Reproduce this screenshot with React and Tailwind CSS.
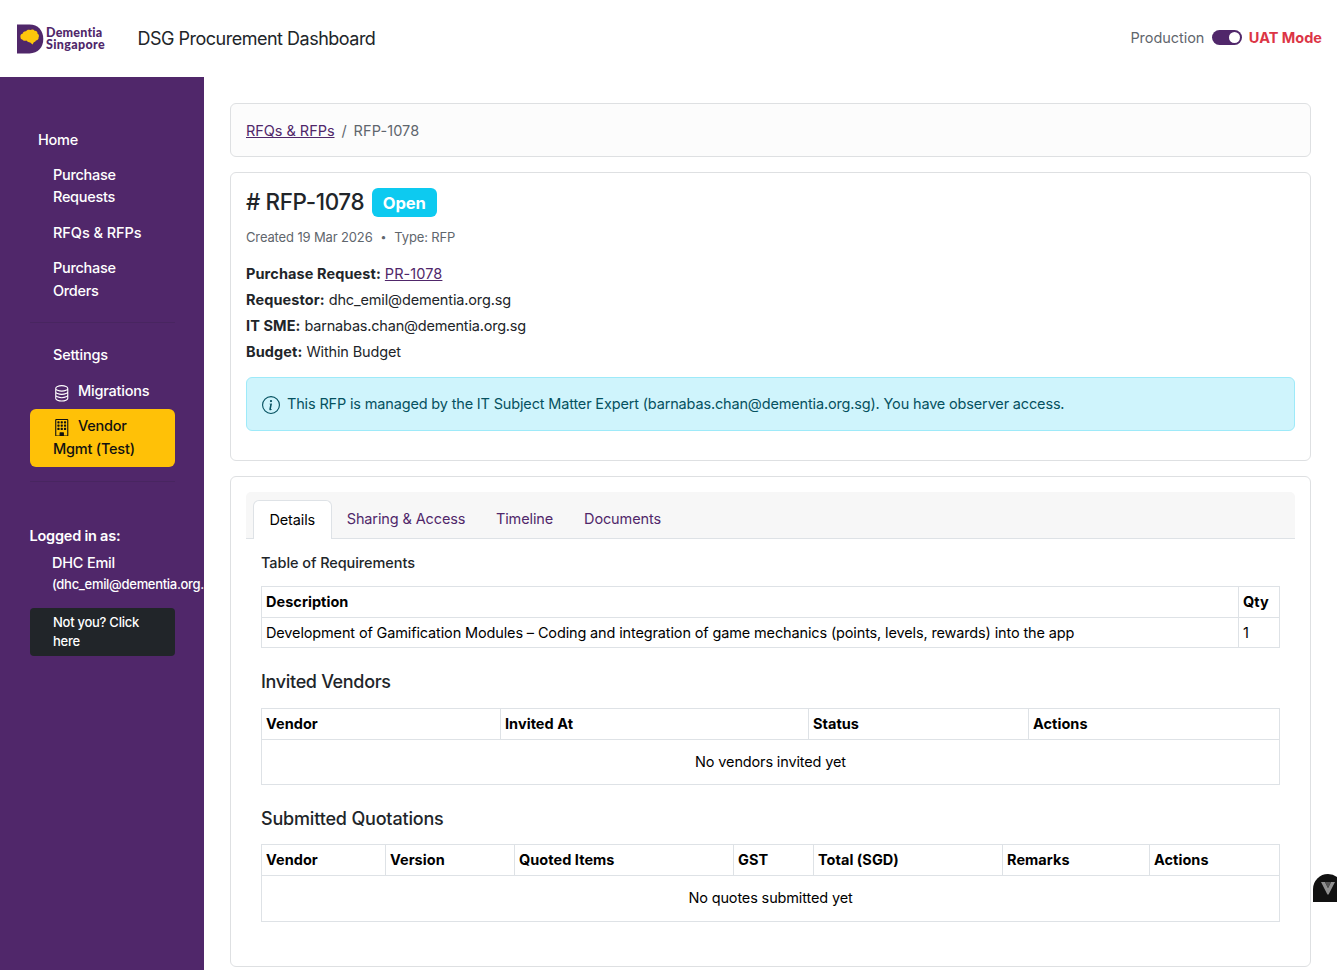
import React from "react";
import { BsDatabase, BsBuilding, BsInfoCircle } from "react-icons/bs";

function Logo() {
  return (
    <div className="flex w-[90px] items-center gap-[2px]">
      <svg width="27" height="30" viewBox="0 0 27 30">
        <path d="M0 0.5H12.5C21 .5 26.3 6.6 26.3 15S21 29.4 12.5 29.4H0Z" fill="#50276a" />
        <path d="M3.5 13.2C2.9 11.4 4.1 10 5.6 9.8 5.7 7.8 7.6 6.9 9 7.2 9.7 5.6 12 5.2 13.2 6.1 14.8 5 16.8 5.4 17.6 6.8 19.6 6.6 20.8 8.2 20.4 9.4 22 10.3 22.3 12.2 21.6 13.3 22 15.3 20.4 16.5 18.9 16.6 18.6 17.8 17.4 18.2 16.8 18.2L15.6 20.5 13.2 18.4C11.4 18.2 10.2 17.6 9.4 16.5 7.6 17.2 6 16.6 5.3 15.5 4 15.2 3.4 14.2 3.5 13.2Z" fill="#fdc70c" />
      </svg>
      <div className="flex flex-col font-[Lato,sans-serif] text-[12.5px] leading-[11.5px] font-black text-[#50276a]">
        <span className="tracking-[0.2px]">Dementia</span>
        <span className="tracking-[0.34px]">Singapore</span>
      </div>
    </div>
  );
}

function Header() {
  return (
    <header className="flex h-[77px] shrink-0 items-center justify-between bg-white pr-[15px] pl-[17px]">
      <div className="flex items-center">
        <Logo />
        <h1 className="ml-[30.5px] text-[18px] leading-6 tracking-[-0.5px] whitespace-nowrap">DSG Procurement Dashboard</h1>
      </div>
      <div className="flex items-center pb-[2px] whitespace-nowrap">
        <span className="pt-[2px] tracking-[-0.05px] text-[#5f666d]">Production</span>
        <span className="ml-[7.5px] flex h-[15px] w-[30px] items-center justify-end rounded-full bg-[#50276a] pr-[2px]">
          <span className="size-[11px] rounded-full bg-white" />
        </span>
        <span className="ml-[7px] pt-px font-bold tracking-normal text-[#dc3545]">UAT Mode</span>
      </div>
    </header>
  );
}

function Sidebar() {
  return (
    <aside className="w-[204px] shrink-0 overflow-hidden bg-[#50276a] pt-[45px] pr-[29.5px] pl-[29.5px] font-medium tracking-[-0.22px] text-white">
      <nav className="flex flex-col">
        <a className="px-[8.5px] py-[6.5px]">Home</a>
        <a className="px-[23.5px] py-[6.5px] tracking-[-0.3px]">Purchase Requests</a>
        <a className="py-[6.5px] pl-[23.5px] tracking-[-0.05px] whitespace-nowrap">RFQs &amp; RFPs</a>
        <a className="px-[23.5px] py-[6.5px] tracking-[-0.3px]">Purchase Orders</a>
        <hr className="mt-[13.5px] mb-[15px] border-[#482560]" />
        <a className="py-[6.5px] pl-[23.5px]">Settings</a>
        <a className="flex items-center py-[6.5px] pl-[23.5px]">
          <BsDatabase className="mt-[3px] mr-[7.5px] -mb-[1px] size-[17.5px]" />
          Migrations
        </a>
        <a className="rounded-[6px] bg-[#ffc107] py-[6.5px] pl-[23.5px] text-[#111]">
          <span className="flex items-center">
            <BsBuilding className="mt-[2px] mr-[7.5px] size-[17.5px]" />
            Vendor
          </span>
          Mgmt (Test)
        </a>
        <hr className="mt-[14.5px] border-[#482560]" />
      </nav>
      <div className="mt-[42.5px] font-semibold">Logged in as:</div>
      <div className="mt-[5.5px] pl-[22.5px]">
        <div>DHC Emil</div>
        <div className="text-[13px] leading-[19px] tracking-[-0.3px] whitespace-nowrap">(dhc_emil@dementia.org.sg)</div>
      </div>
      <div className="mt-[14px] rounded-[4px] bg-[#212529] px-[23.5px] pt-[5px] pb-[4px] text-[13px] leading-[19.5px] tracking-[-0.27px]">
        Not you? Click here
      </div>
    </aside>
  );
}

function Card({ className = "", children }) {
  return <section className={"rounded-[6px] border border-[#dee0e2] px-[15px] " + className}>{children}</section>;
}

const cell = "border border-[#dee2e6] px-[4px]";

function Table({ columns, widths, children }) {
  return (
    <table className="w-full table-fixed border-collapse text-black">
      <colgroup>
        {widths.map((w, i) => (
          <col key={i} style={{ width: w }} />
        ))}
      </colgroup>
      <thead>
        <tr className="h-[31px] text-left tracking-[0.04px]">
          {columns.map((c) => (
            <th key={c} className={cell + " font-bold"}>{c}</th>
          ))}
        </tr>
      </thead>
      <tbody>{children}</tbody>
    </table>
  );
}

function Empty({ span, children }) {
  return (
    <tr className="h-[45.5px]">
      <td colSpan={span} className={cell + " text-center"}>{children}</td>
    </tr>
  );
}

function Field({ label, children }) {
  return (
    <div>
      <b className="tracking-[0.1px]">{label}</b> {children}
    </div>
  );
}

export default function App() {
  return (
    <div className="relative flex h-[970px] flex-col overflow-hidden bg-white font-[Inter,sans-serif] text-[14.5px] leading-[22.4px] text-[#212529]">
      <Header />
      <div className="flex min-h-0 flex-1">
        <Sidebar />
        <main className="flex flex-1 flex-col gap-[15px] px-[26px] pt-[26px] tracking-[-0.14px]">
          <Card className="flex h-[54px] shrink-0 items-center bg-[#fcfcfc] pt-[2px]">
            <a className="tracking-[-0.04px] text-[#50276a] underline">RFQs &amp; RFPs</a>
            <span className="mx-[7px] text-[#5f666d]">/</span>
            <span className="tracking-[0.1px] text-[#5f666d]">RFP-1078</span>
          </Card>

          <Card className="h-[289px] shrink-0 pt-[15px]">
            <div className="flex items-center">
              <h2 className="pb-[2px] text-[22.4px] leading-[27px] font-medium tracking-[-0.35px]"># RFP-1078</h2>
              <span className="ml-[7.5px] flex h-[29px] w-[65px] items-center justify-center rounded-[6px] bg-[#0dcaf0] pt-px text-[16.6px] font-bold text-white">
                Open
              </span>
            </div>
            <p className="mt-[11px] flex text-[13px] leading-[19px] text-[#5f666d]">
              <span>Created 19 Mar 2026</span>
              <span className="mx-[8px] text-[10.5px]">•</span>
              <span>Type: RFP</span>
            </p>
            <div className="mt-[14px] leading-[26px]">
              <Field label="Purchase Request:">
                <a className="tracking-[0.08px] text-[#50276a] underline">PR-1078</a>
              </Field>
              <Field label="Requestor:">dhc_emil@dementia.org.sg</Field>
              <Field label="IT SME:">
                <span className="tracking-[-0.2px]">barnabas.chan@dementia.org.sg</span>
              </Field>
              <Field label="Budget:">Within Budget</Field>
            </div>
            <div className="mt-[12px] flex h-[54px] items-center rounded-[6px] border border-[#9eeaf9] bg-[#cff4fc] pt-px pl-[15px] tracking-[-0.16px] text-[#055160]">
              <BsInfoCircle className="mt-px mr-[7px] size-[18px]" />
              This RFP is managed by the IT Subject Matter Expert (barnabas.chan@dementia.org.sg). You have observer access.
            </div>
          </Card>

          <Card className="h-[490.5px] shrink-0 pt-[15px]">
            <div className="flex h-[47px] items-end rounded-t-[5px] border-b border-[#dee2e6] bg-[#f7f7f7] pl-[7px] tracking-[-0.12px] text-[#50276a]">
              <span className="-mb-px flex h-[39px] w-[78.5px] items-center justify-center rounded-t-[6px] border border-b-0 border-[#dee2e6] bg-white text-black">
                Details
              </span>
              <span className="flex h-[38px] w-[149px] items-center justify-center pt-px">Sharing &amp; Access</span>
              <span className="flex h-[38px] w-[88px] items-center justify-center pt-px">Timeline</span>
              <span className="flex h-[38px] w-[108px] items-center justify-center pt-px">Documents</span>
            </div>
            <div className="px-[15px] pt-[12.6px]">
              <h6 className="mb-[12.4px] font-medium tracking-[-0.07px]">Table of Requirements</h6>
              <Table columns={["Description", "Qty"]} widths={[977, 41]}>
                <tr className="h-[30px]">
                  <td className={cell + " whitespace-nowrap"}>
                    Development of Gamification Modules – Coding and integration of game mechanics (points, levels, rewards) into the app
                  </td>
                  <td className={cell}>1</td>
                </tr>
              </Table>
              <h5 className="mt-[23px] mb-[14px] text-[18px] font-medium tracking-[-0.33px]">Invited Vendors</h5>
              <Table columns={["Vendor", "Invited At", "Status", "Actions"]} widths={[239, 308, 220, 251]}>
                <Empty span={4}>No vendors invited yet</Empty>
              </Table>
              <h5 className="mt-[22.5px] mb-[14px] text-[18px] font-medium tracking-[-0.18px]">Submitted Quotations</h5>
              <Table
                columns={["Vendor", "Version", "Quoted Items", "GST", "Total (SGD)", "Remarks", "Actions"]}
                widths={[124, 129, 219, 80, 189, 147, 130]}
              >
                <Empty span={7}>No quotes submitted yet</Empty>
              </Table>
            </div>
          </Card>
        </main>
      </div>
      <div className="absolute top-[874px] right-[-6px] flex h-[28px] w-[30px] items-center justify-center rounded-t-[15px] bg-[#111]">
        <svg width="14" height="13" viewBox="0 0 14 13">
          <path d="M0 0H4L7 6 10 0H14L7.6 12.5H6.4Z" fill="#8f8f8f" />
          <path d="M4 0H10L7 6Z" fill="#555" />
        </svg>
      </div>
    </div>
  );
}
